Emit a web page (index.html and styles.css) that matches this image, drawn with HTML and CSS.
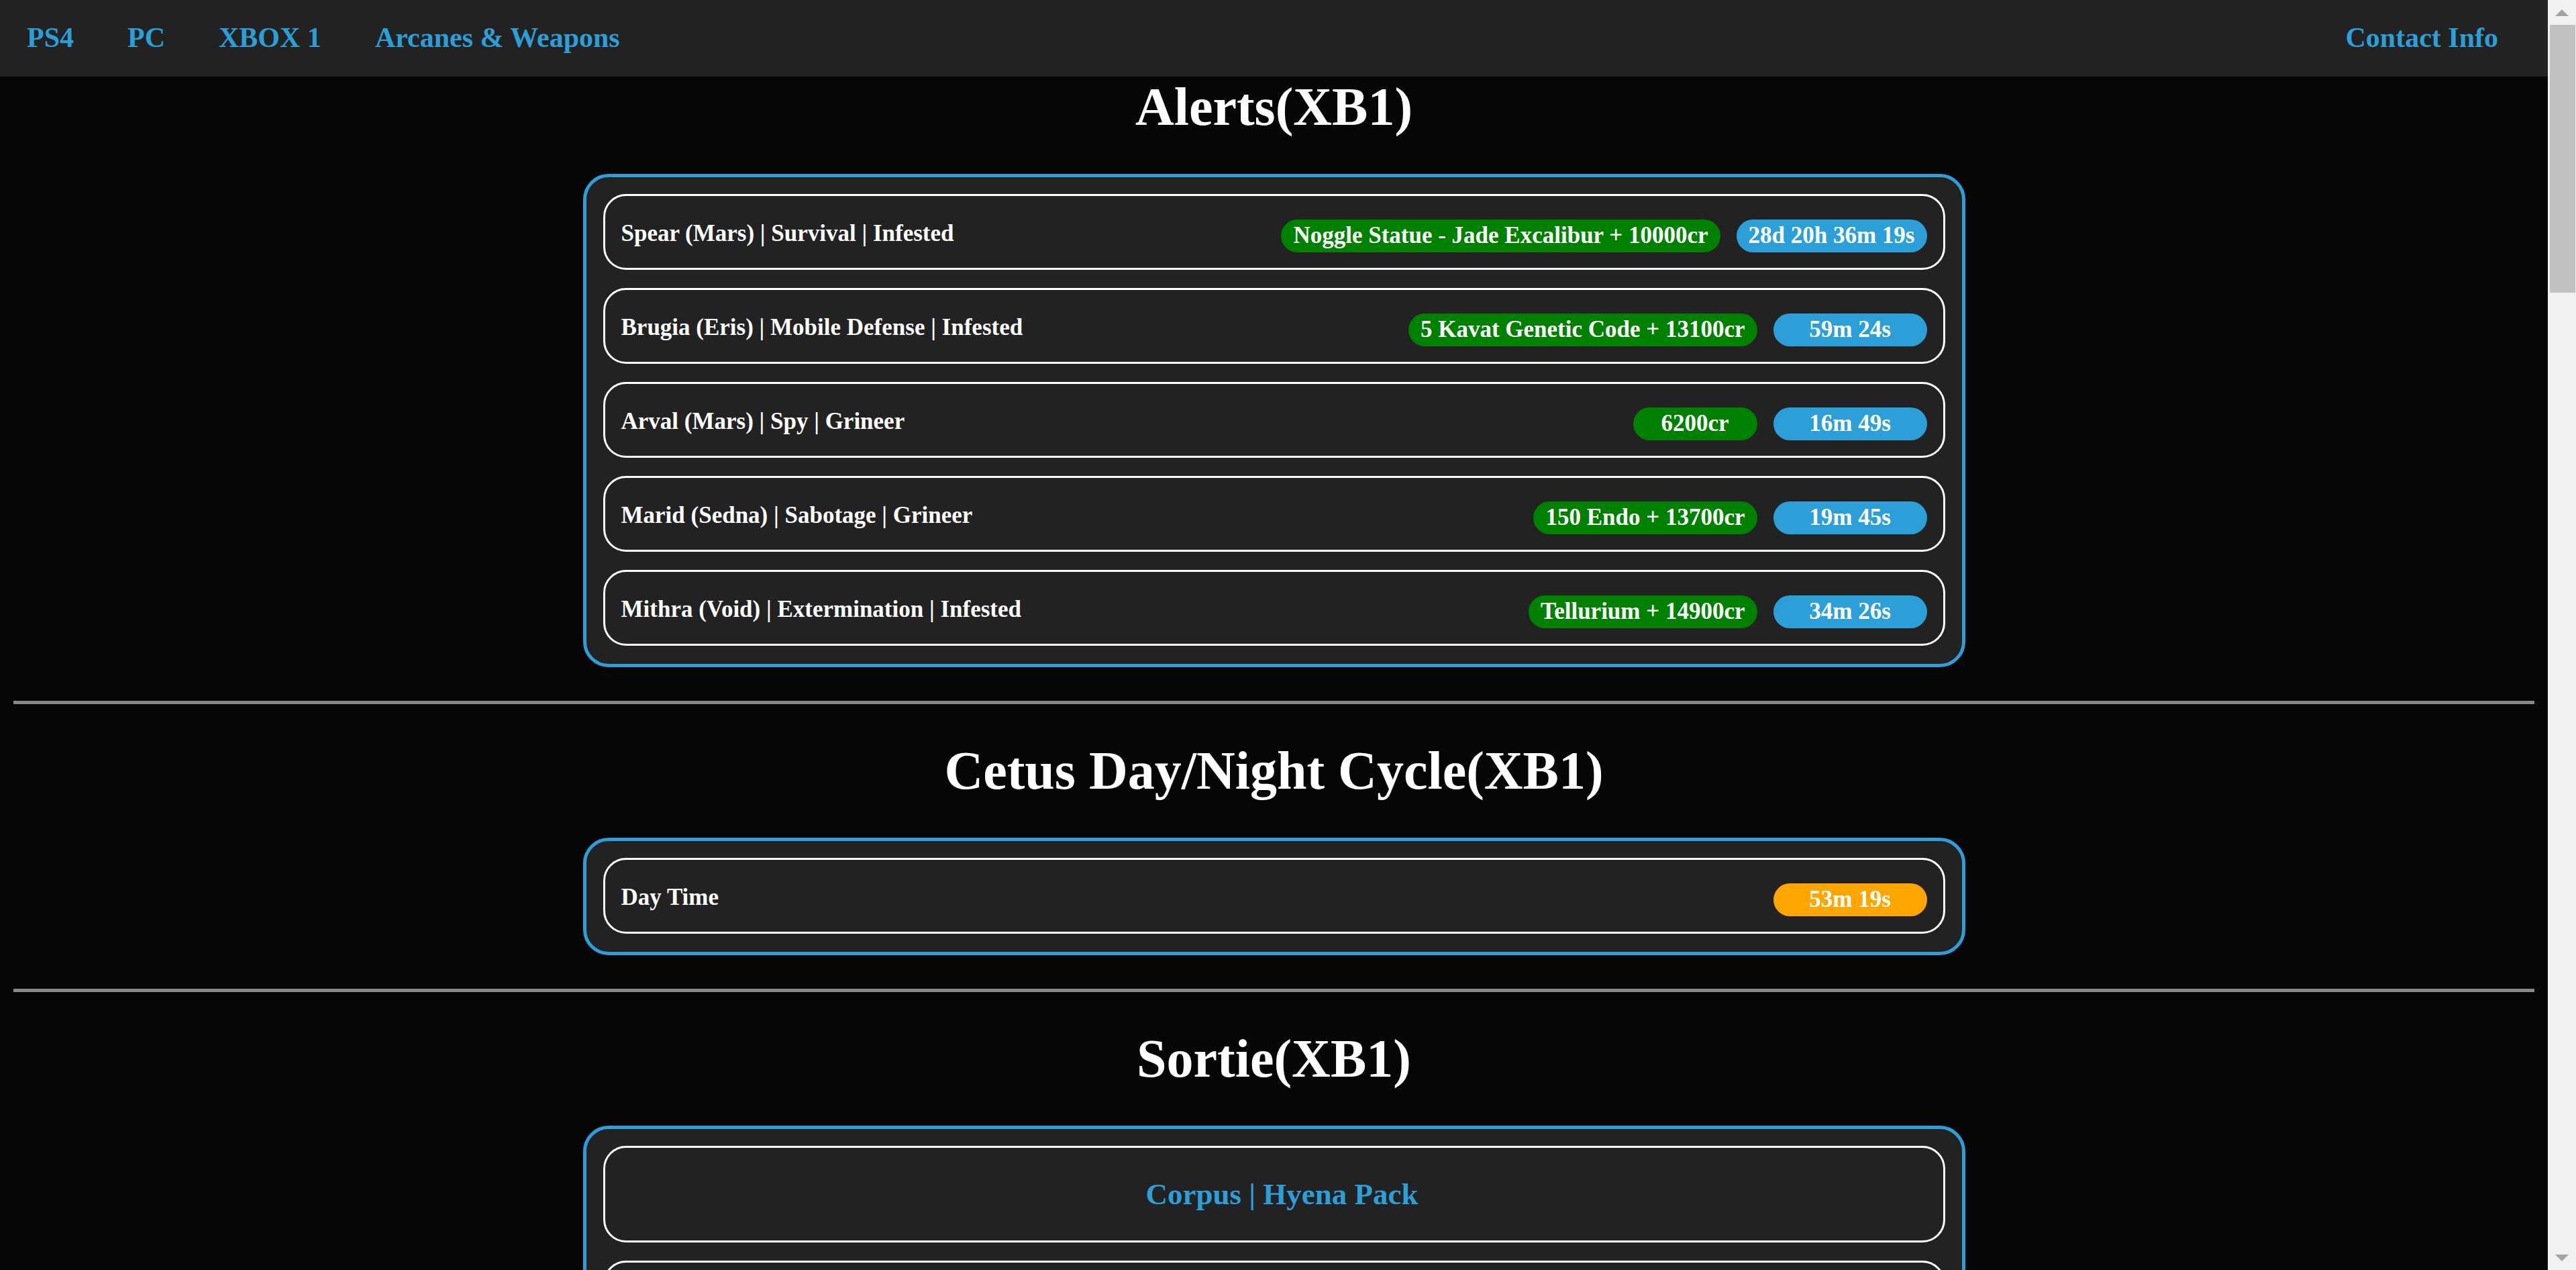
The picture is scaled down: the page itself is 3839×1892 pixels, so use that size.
FILE: index.html
```html
<!DOCTYPE html>
<html lang="en">
<head>
<meta charset="utf-8">
<title>Warframe Tracker (XB1)</title>
<link rel="stylesheet" href="styles.css">
</head>
<body>
<div class="viewport">
  <div class="page">
    <nav class="topnav">
      <ul class="nav-list">
        <li><a href="#">PS4</a></li>
        <li><a href="#">PC</a></li>
        <li><a href="#">XBOX 1</a></li>
        <li><a href="#">Arcanes &amp; Weapons</a></li>
        <li class="nav-right"><a href="#">Contact Info</a></li>
      </ul>
    </nav>

    <main>
      <h1 class="section-title first">Alerts(XB1)</h1>
      <div class="panel">
        <div class="row">
          <span class="row-title">Spear (Mars) | Survival | Infested</span>
          <div class="badges">
            <span class="badge reward">Noggle Statue - Jade Excalibur + 10000cr</span>
            <span class="badge timer">28d 20h 36m 19s</span>
          </div>
        </div>
        <div class="row">
          <span class="row-title">Brugia (Eris) | Mobile Defense | Infested</span>
          <div class="badges">
            <span class="badge reward">5 Kavat Genetic Code + 13100cr</span>
            <span class="badge timer">59m 24s</span>
          </div>
        </div>
        <div class="row">
          <span class="row-title">Arval (Mars) | Spy | Grineer</span>
          <div class="badges">
            <span class="badge reward">6200cr</span>
            <span class="badge timer">16m 49s</span>
          </div>
        </div>
        <div class="row">
          <span class="row-title">Marid (Sedna) | Sabotage | Grineer</span>
          <div class="badges">
            <span class="badge reward">150 Endo + 13700cr</span>
            <span class="badge timer">19m 45s</span>
          </div>
        </div>
        <div class="row">
          <span class="row-title">Mithra (Void) | Extermination | Infested</span>
          <div class="badges">
            <span class="badge reward">Tellurium + 14900cr</span>
            <span class="badge timer">34m 26s</span>
          </div>
        </div>
      </div>

      <hr class="divider">

      <h1 class="section-title">Cetus Day/Night Cycle(XB1)</h1>
      <div class="panel">
        <div class="row">
          <span class="row-title">Day Time</span>
          <div class="badges">
            <span class="badge timer day">53m 19s</span>
          </div>
        </div>
      </div>

      <hr class="divider">

      <h1 class="section-title">Sortie(XB1)</h1>
      <div class="panel">
        <div class="row row-center">
          <span class="sortie-boss">Corpus | Hyena Pack</span>
        </div>
        <div class="row row-empty"></div>
      </div>
    </main>
  </div>

  <div class="scrollbar" aria-hidden="true">
    <div class="sb-btn">
      <svg width="20" height="10" viewBox="0 0 20 10"><polygon points="0,10 10,0 20,10" fill="#a3a3a3"/></svg>
    </div>
    <div class="sb-track">
      <div class="sb-thumb"></div>
    </div>
    <div class="sb-btn">
      <svg width="20" height="10" viewBox="0 0 20 10"><polygon points="0,0 20,0 10,10" fill="#a3a3a3"/></svg>
    </div>
  </div>
</div>
</body>
</html>
```

FILE: styles.css
```css
html, body {
  margin: 0;
  padding: 0;
  height: 100%;
}

body {
  background: #060606;
  color: #ffffff;
  font-family: "Liberation Serif", "Times New Roman", serif;
  font-weight: bold;
  overflow: hidden;
}

.viewport {
  display: grid;
  grid-template-columns: 1fr 42px;
  height: 100vh;
}

.page {
  min-width: 0;
  overflow: hidden;
}

/* ---------- top navigation ---------- */
.topnav {
  background: #222222;
  height: 114px;
}

.nav-list {
  list-style: none;
  margin: 0;
  padding: 0;
  display: flex;
}

.nav-list a {
  display: block;
  color: #2c9fd8;
  text-decoration: none;
  font-size: 42px;
  line-height: 48px;
  padding: 32px 40px 34px;
}

.nav-right {
  margin-left: auto;
  margin-right: 34px;
}

/* ---------- sections ---------- */
.section-title {
  margin: 54px 0;
  font-size: 80px;
  line-height: 91px;
  text-align: center;
  color: #ffffff;
}

.section-title.first {
  margin-top: 0;
}

.divider {
  margin: 50px 20px 0;
  height: 5px;
  border: none;
  background: #888888;
}

.panel {
  width: 2060px;
  box-sizing: border-box;
  margin: 0 auto;
  background: #222222;
  border: 5px solid #2c9fd8;
  border-radius: 38px;
  padding: 25px 25px 0;
}

.row {
  display: flex;
  align-items: flex-start;
  border: 3px solid #ffffff;
  border-radius: 34px;
  padding: 35px 24px 23px;
  margin-bottom: 27px;
  font-size: 35px;
  line-height: 36px;
}

.row-empty {
  height: 49px;
}

.row-title {
  color: #ffffff;
  white-space: nowrap;
  padding-top: 3px;
}

.badges {
  margin-left: auto;
  display: flex;
  align-items: flex-start;
  gap: 24px;
}

.badge {
  display: inline-block;
  box-sizing: border-box;
  padding: 6px 18px 7px;
  border-radius: 25px;
  text-align: center;
  color: #ffffff;
  white-space: nowrap;
}

.badge.reward {
  background: #008000;
  min-width: 185px;
}

.badge.timer {
  background: #2c9fd8;
  min-width: 229px;
}

.badge.timer.day {
  background: #ffa500;
}

.row-center {
  justify-content: center;
  padding: 43px 24px 43px 48px;
}

.sortie-boss {
  color: #2c9fd8;
  font-size: 45px;
  line-height: 52px;
}

/* ---------- scrollbar drawing ---------- */
.scrollbar {
  display: flex;
  flex-direction: column;
  background: #f1f1f1;
}

.sb-btn {
  height: 37px;
  display: flex;
  align-items: center;
  justify-content: center;
}

.sb-track {
  flex: 1;
}

.sb-thumb {
  height: 399px;
  margin: 0 1px 0 3px;
  background: #c1c1c1;
}
```
